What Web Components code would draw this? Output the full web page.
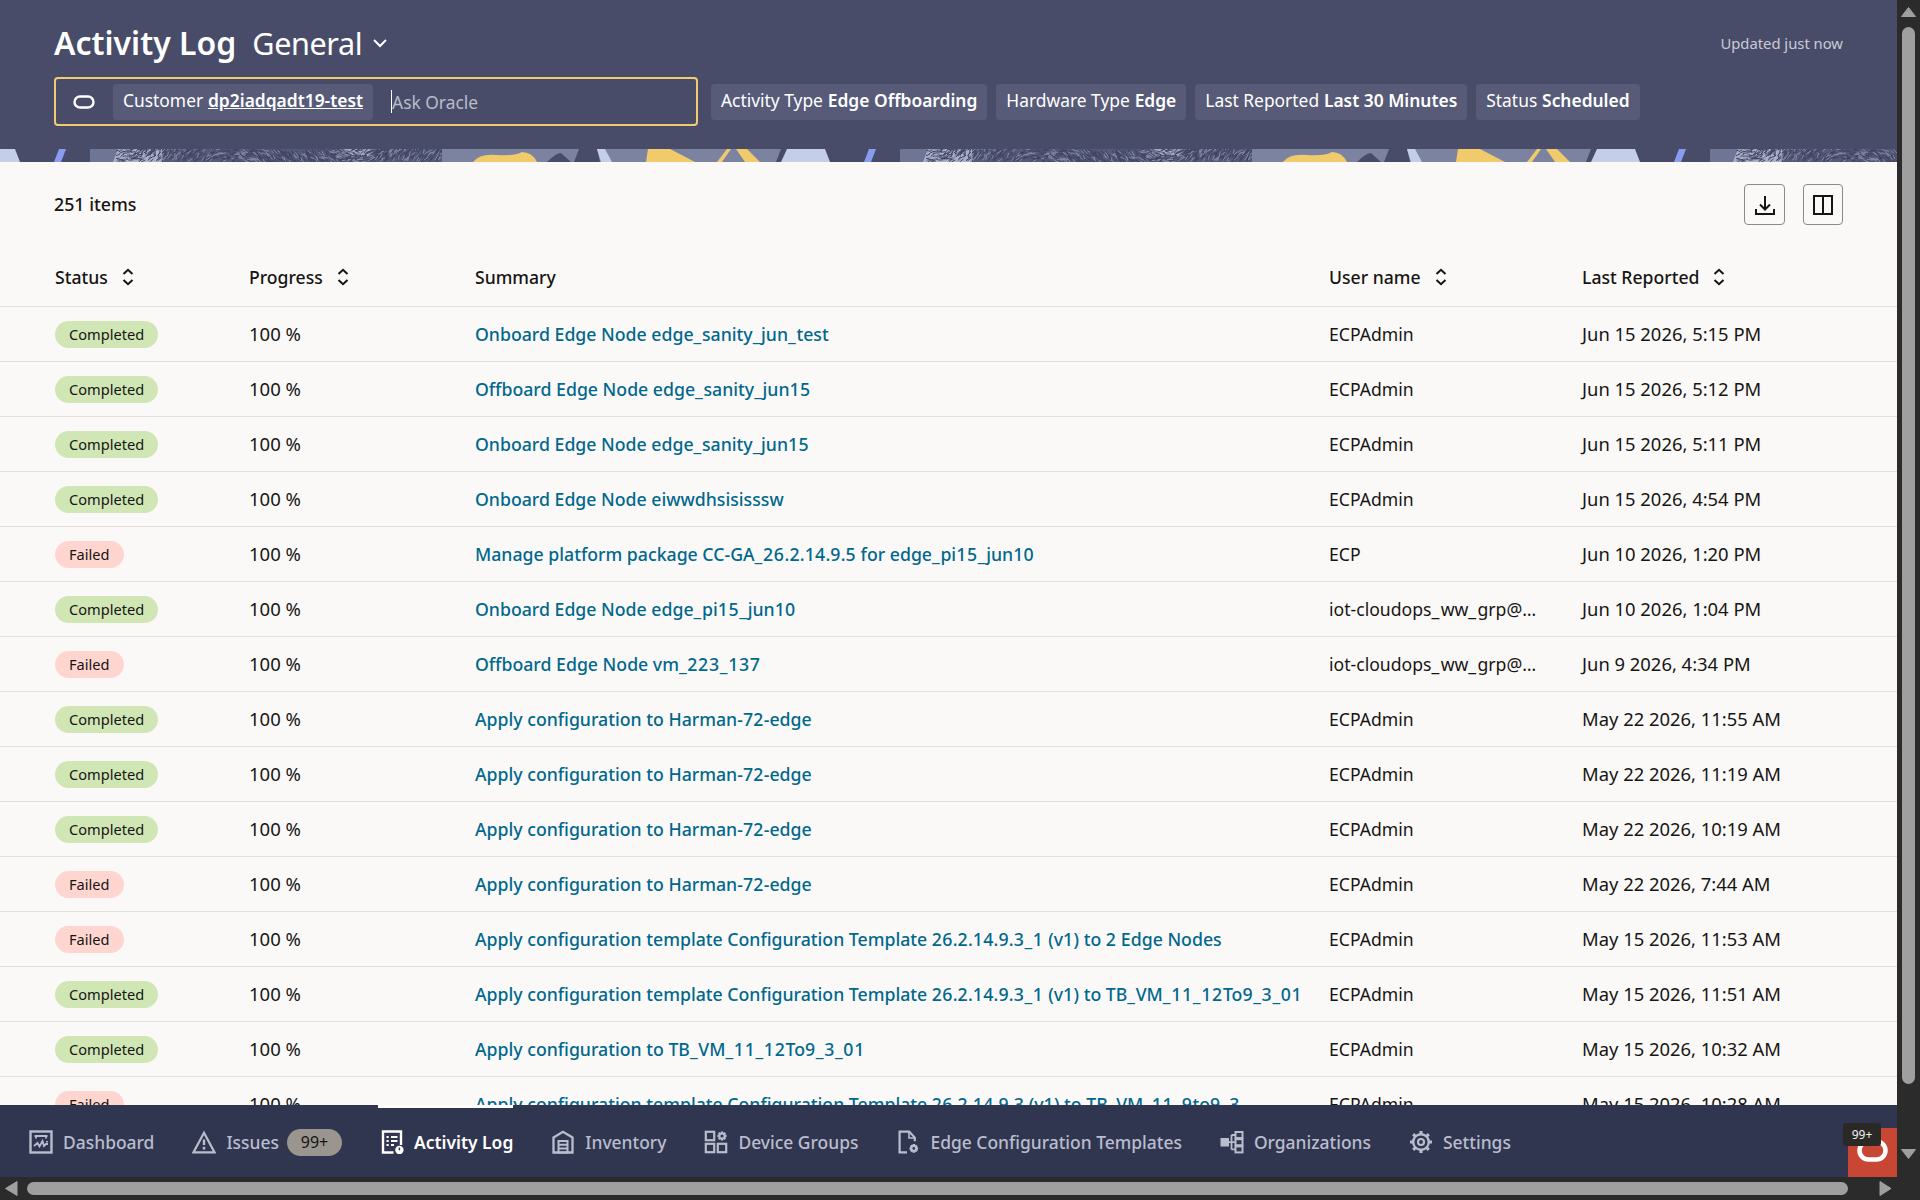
<!DOCTYPE html>
<html lang="en">
<head>
<meta charset="utf-8">
<title>Activity Log</title>
<style>
  html, body { margin: 0; height: 100%; overflow: hidden; background: #2b2b2b; }
  body { font-family: "Noto Sans", "Liberation Sans", sans-serif; color: #161513; }
</style>
</head>
<body>
<app-shell>
  <page-header slot="top" updated="Updated just now">
    <filter-chip slot="search" label="Customer" value="dp2iadqadt19-test" link></filter-chip>
    <filter-chip label="Activity Type" value="Edge Offboarding"></filter-chip>
    <filter-chip label="Hardware Type" value="Edge"></filter-chip>
    <filter-chip label="Last Reported" value="Last 30 Minutes"></filter-chip>
    <filter-chip label="Status" value="Scheduled"></filter-chip>
  </page-header>
  <pattern-band slot="top"></pattern-band>
  <table-toolbar slot="top" count="251 items"></table-toolbar>
  <activity-table></activity-table>
  <nav-bar slot="bottom">
    <nav-item icon="dashboard">Dashboard</nav-item>
    <nav-item icon="issues" badge="99+">Issues</nav-item>
    <nav-item icon="activity" active>Activity Log</nav-item>
    <nav-item icon="inventory">Inventory</nav-item>
    <nav-item icon="groups">Device Groups</nav-item>
    <nav-item icon="template">Edge Configuration Templates</nav-item>
    <nav-item icon="orgs">Organizations</nav-item>
    <nav-item icon="settings">Settings</nav-item>
  </nav-bar>
</app-shell>

<script>
const FONT = `"Noto Sans", "Liberation Sans", sans-serif`

// a cog: ring plus teeth, all as thick strokes
function gear(cx, cy, r, teeth, tw, sw) {
  let t = ''
  for (let i = 0; i < teeth; i++) {
    const a = i * 2 * Math.PI / teeth
    const x1 = cx + Math.cos(a) * r, y1 = cy + Math.sin(a) * r
    const x2 = cx + Math.cos(a) * (r + tw), y2 = cy + Math.sin(a) * (r + tw)
    t += `M${x1.toFixed(2)} ${y1.toFixed(2)}L${x2.toFixed(2)} ${y2.toFixed(2)}`
  }
  return `<circle cx="${cx}" cy="${cy}" r="${r}" stroke-width="${sw}"/><path d="${t}" stroke-width="${sw * 1.3}"/>`
}

// the reference font sets digits and underscores wider than Noto Sans
const widen = s => s.replace(/[\d_]+/g, m => `<span class="${m.includes('_') ? 'u' : 'd'}">${m}</span>`)

const ICONS = {
  dashboard: `<rect x="1.5" y="1.5" width="21" height="21" stroke-width="2.4"/><path d="M5.5 6h13M7 6v2.5M17 6v2.5" stroke-width="1.8"/><path d="M5 16l3.5-3 2 3.5 3-5.5 1.5 5 2-2h2" stroke-width="1.8"/><path d="M18 11v1.4" stroke-width="1.8"/>`,
  issues: `<path d="M12 2.8 22.6 22.4H1.4z" stroke-width="2.2"/><path d="M12 9.5v5.5M12 16.8v2.6" stroke-width="2.4"/>`,
  activity: `<path d="M13.5 22.5H3V1.5h18v13.5" stroke-width="2.4"/><path d="M6.5 7h2.2M11 7h6.5M6.5 11h2.2M11 11h6.5M6.5 15h2.2M11 15h3" stroke-width="2"/><circle cx="19.4" cy="20" r="4.2" fill="currentColor" stroke="none"/><path d="M19.4 17.6v2.8" stroke="#313650" stroke-width="1.4"/>`,
  inventory: `<path d="M2.5 7.5 12 1.8l9.5 5.7v15h-19z" stroke-width="2.3"/><path d="M7.5 11h9v11.5h-9zM7.5 14.8h9M7.5 18.6h9" stroke-width="2"/>`,
  groups: `<rect x="1.8" y="1.8" width="8.4" height="8.4" stroke-width="2.2"/><rect x="1.8" y="13.8" width="8.4" height="8.4" stroke-width="2.2"/><rect x="13.8" y="13.8" width="8.4" height="8.4" stroke-width="2.2"/>${gear(18, 6, 2.5, 8, 2.1, 1.8)}`,
  template: `<path d="M11 22.4H3.6V1.6h9.6l5.6 6v3.6" stroke-width="2.2"/><path d="M13 2v6h6" stroke-width="1.6"/>${gear(17.8, 18.4, 2.3, 8, 2, 1.9)}`,
  orgs: `<rect x="1.5" y="9" width="6.5" height="6.5" fill="currentColor"/><rect x="15.5" y="2" width="7" height="6" stroke-width="2"/><rect x="15.5" y="9.2" width="7" height="6" stroke-width="2"/><rect x="15.5" y="16.4" width="7" height="6" stroke-width="2"/><path d="M8 12.2h7.5M11.5 5v14.4M11.5 5h4M11.5 19.4h4" stroke-width="1.8"/>`,
  settings: `${gear(12, 12, 7.8, 8, 3.2, 2.4)}<circle cx="12" cy="12" r="3" stroke-width="2.2"/>`
}

const ROWS = [
  ["Completed", "Onboard Edge Node edge_sanity_jun_test", "ECPAdmin", "Jun 15 2026, 5:15 PM"],
  ["Completed", "Offboard Edge Node edge_sanity_jun15", "ECPAdmin", "Jun 15 2026, 5:12 PM"],
  ["Completed", "Onboard Edge Node edge_sanity_jun15", "ECPAdmin", "Jun 15 2026, 5:11 PM"],
  ["Completed", "Onboard Edge Node eiwwdhsisisssw", "ECPAdmin", "Jun 15 2026, 4:54 PM"],
  ["Failed", "Manage platform package CC-GA_26.2.14.9.5 for edge_pi15_jun10", "ECP", "Jun 10 2026, 1:20 PM"],
  ["Completed", "Onboard Edge Node edge_pi15_jun10", "iot-cloudops_ww_grp@…", "Jun 10 2026, 1:04 PM"],
  ["Failed", "Offboard Edge Node vm_223_137", "iot-cloudops_ww_grp@…", "Jun 9 2026, 4:34 PM"],
  ["Completed", "Apply configuration to Harman-72-edge", "ECPAdmin", "May 22 2026, 11:55 AM"],
  ["Completed", "Apply configuration to Harman-72-edge", "ECPAdmin", "May 22 2026, 11:19 AM"],
  ["Completed", "Apply configuration to Harman-72-edge", "ECPAdmin", "May 22 2026, 10:19 AM"],
  ["Failed", "Apply configuration to Harman-72-edge", "ECPAdmin", "May 22 2026, 7:44 AM"],
  ["Failed", "Apply configuration template Configuration Template 26.2.14.9.3_1 (v1) to 2 Edge Nodes", "ECPAdmin", "May 15 2026, 11:53 AM"],
  ["Completed", "Apply configuration template Configuration Template 26.2.14.9.3_1 (v1) to TB_VM_11_12To9_3_01", "ECPAdmin", "May 15 2026, 11:51 AM"],
  ["Completed", "Apply configuration to TB_VM_11_12To9_3_01", "ECPAdmin", "May 15 2026, 10:32 AM"],
  ["Failed", "Apply configuration template Configuration Template 26.2.14.9.3 (v1) to TB_VM_11_9to9_3", "ECPAdmin", "May 15 2026, 10:28 AM"]
]

class AppShell extends HTMLElement {
  constructor() {
    super()
    this.attachShadow({ mode: 'open' }).innerHTML = `<style>
      :host { display: grid; grid-template-columns: 1897px 23px; grid-template-rows: 1177px 23px; height: 1200px; font-family: ${FONT}; }
      .main { display: flex; flex-direction: column; min-height: 0; background: #fbf9f8; }
      .scroller { flex: 1; min-height: 0; overflow: hidden; }
    </style>
    <div class="main">
      <slot name="top"></slot>
      <div class="scroller"><slot></slot></div>
      <slot name="bottom"></slot>
    </div>
    <fake-scrollbar vertical></fake-scrollbar>
    <fake-scrollbar></fake-scrollbar>
    <div></div>`
  }
}

class FakeScrollbar extends HTMLElement {
  constructor() {
    super()
    const v = this.hasAttribute('vertical')
    this.attachShadow({ mode: 'open' }).innerHTML = `<style>
      :host { display: flex; background: #2b2b2b; flex-direction: ${v ? 'column' : 'row'}; align-items: ${v ? 'flex-start' : 'center'}; }
      .thumb { background: #9f9f9f; border-radius: 7px; }
      svg { display: block; flex: none; }
    </style>` + (v ? `
      <svg width="23" height="27" viewBox="0 0 23 27"><path d="M4.5 16.5 11.5 7.5 18.5 16.5z" fill="#9f9f9f" stroke="#9f9f9f" stroke-linejoin="round"/></svg>
      <div class="thumb" style="width:13px;height:1057px;margin-left:5px"></div>
      <svg width="23" height="29" viewBox="0 0 23 29" style="margin-top:auto;margin-bottom:0"><path d="M4.5 1.5H18.5L11.5 10.5z" fill="#9f9f9f" stroke="#9f9f9f" stroke-linejoin="round"/></svg>`
    : `
      <svg width="27" height="23" viewBox="0 0 27 23"><path d="M17 4.5V18.5L5.5 11.5z" fill="#9f9f9f" stroke="#9f9f9f" stroke-linejoin="round"/></svg>
      <div class="thumb" style="width:1821px;height:13px"></div>
      <svg width="49" height="23" viewBox="0 0 49 23"><path d="M32 4.5V18.5L43 11.5z" fill="#9f9f9f" stroke="#9f9f9f" stroke-linejoin="round"/></svg>`)
  }
}

class PageHeader extends HTMLElement {
  constructor() {
    super()
    this.attachShadow({ mode: 'open' }).innerHTML = `<style>
      :host { display: flex; flex-direction: column; box-sizing: border-box; height: 149px; padding: 22px 54px 0; background: #484c68; color: #fff; }
      .top { display: flex; align-items: baseline; height: 42px; }
      h1 { margin: 0; font-size: 32px; line-height: 42px; font-weight: 600; }
      .view { margin-left: 16px; font-size: 30.6px; line-height: 42px; font-weight: 400; letter-spacing: -.4px; }
      .chev { margin-left: 10px; align-self: center; }
      .updated { margin-left: auto; align-self: center; font-size: 14.8px; color: #c9cbd6; }
      .filters { display: flex; gap: 9px; margin-top: 13px; align-items: center; }
      .search { box-sizing: border-box; display: flex; align-items: center; width: 644px; height: 49px; margin-right: 4px; border: 2px solid #f0cc71; border-radius: 4px; padding-left: 17px; }
      .ring { flex: none; margin-right: 18px; display: block; }
      .ask { display: flex; align-items: center; margin-left: 18px; height: 23px; border-left: 1px solid #fff; font-size: 17.4px; color: #b9bccb; }
    </style>
    <div class="top">
      <h1>Activity Log</h1><span class="view">General</span>
      <svg class="chev" width="16" height="16" viewBox="0 0 16 16" fill="none" stroke="#fff" stroke-width="2"><path d="M2 5l6 6 6-6"/></svg>
      <span class="updated">${this.getAttribute('updated')}</span>
    </div>
    <div class="filters">
      <div class="search">
        <svg class="ring" width="22" height="14" viewBox="0 0 22 14" fill="none" stroke="#fff" stroke-width="2.4"><rect x="1.5" y="1.5" width="19" height="11" rx="5.5"/></svg>
        <slot name="search"></slot>
        <span class="ask">Ask Oracle</span>
      </div>
      <slot></slot>
    </div>`
  }
}

class FilterChip extends HTMLElement {
  constructor() {
    super()
    const link = this.hasAttribute('link')
    this.attachShadow({ mode: 'open' }).innerHTML = `<style>
      :host { display: inline-flex; align-items: center; box-sizing: border-box; height: 36px; padding: 0 10px 3px; background: #575b78; border-radius: 4px; font-size: 17.4px; color: #fff; white-space: nowrap; flex: none; }
      b { font-weight: 600; margin-left: .28em; }
      .link { text-decoration: underline; }
    </style>${this.getAttribute('label')} <b class="${link ? 'link' : ''}">${this.getAttribute('value')}</b>`
  }
}

class PatternBand extends HTMLElement {
  constructor() {
    super()
    // one repeat of the banner strip is 810px wide, the fur texture is random short dashes
    let seed = 7
    const rnd = () => (seed = (seed * 16807) % 2147483647) / 2147483647
    let dark = '', light = ''
    for (let i = 0; i < 900; i++) {
      const x = 116 + rnd() * 326, y = rnd() * 13
      const a = Math.sin(x / 37) + rnd() - .5, len = 3 + rnd() * 3
      const seg = `M${x.toFixed(1)} ${y.toFixed(1)}l${(Math.cos(a) * len).toFixed(1)} ${(Math.sin(a) * len).toFixed(1)}`
      if (i % 4 == 0) light += seg; else dark += seg
    }
    this.attachShadow({ mode: 'open' }).innerHTML = `<style>
      :host { display: block; height: 13px; background: #484c68; }
      svg { display: block; width: 100%; height: 13px; }
    </style>
    <svg xmlns="http://www.w3.org/2000/svg" preserveAspectRatio="none">
      <defs><pattern id="strip" patternUnits="userSpaceOnUse" width="810" height="13">
        <rect width="810" height="13" fill="#484c68"/>
        <path d="M0 0H15L20 13H0z" fill="#c5cee9"/>
        <path d="M59 0H66L61 13H54z" fill="#8a9cf2"/>
        <path d="M90 0H442V13H90z" fill="#6f7695"/>
        <path d="M118 0H162V13H113z" fill="#a9afcb"/>
        <path d="M162 0H442V13H162z" fill="#55597a"/>
        <path d="M343 0H375L368 7Q360 9 352 6z" fill="#a7acc4"/>
        <path d="${dark}" stroke="#3f4360" stroke-width="1" fill="none"/>
        <path d="${light}" stroke="#858aa6" stroke-width="1" fill="none"/>
        <path d="M442 0H781L776 13H442z" fill="#7b83a1"/>
        <path d="M473 13Q480 4 497 6 515 7 522 3 532 3 537 13z" fill="#f0ca6b"/>
        <path d="M547 13Q556 4 561 4L571 13z" fill="#484c68"/>
        <path d="M579 0H597L600 13H574z" fill="#484c68"/>
        <path d="M597 0H605L612 13H601z" fill="#c5cee9"/>
        <path d="M648 0H670L695 13H646z" fill="#f0ca6b"/>
        <path d="M727 0H731L722 13H717z" fill="#f0ca6b"/>
        <path d="M736 0H747L760 13H745z" fill="#f0ca6b"/>
        <path d="M787 0H810V13H781z" fill="#c5cee9"/>
      </pattern></defs>
      <rect width="100%" height="13" fill="url(#strip)"/>
    </svg>`
  }
}

class TableToolbar extends HTMLElement {
  constructor() {
    super()
    this.attachShadow({ mode: 'open' }).innerHTML = `<style>
      :host { display: flex; align-items: center; box-sizing: border-box; height: 85px; padding: 0 54px 0 54px; color: #161513; font-size: 17.8px; font-weight: 500; }
      span { padding-bottom: 2px; }
      .btns { margin-left: auto; display: flex; gap: 18px; }
      button { box-sizing: border-box; width: 41px; height: 41px; padding: 0; display: flex; align-items: center; justify-content: center; background: none; border: 1px solid #8d8a86; border-radius: 4px; color: #161513; }
      button + button { width: 40px; }
    </style>
    <span>${this.getAttribute('count')}</span>
    <div class="btns">
      <button><svg width="24" height="24" viewBox="0 0 24 24" fill="none" stroke="currentColor" stroke-width="2"><path d="M12 3v13M7 11.5l5 5 5-5M3 16v5h18v-5"/></svg></button>
      <button><svg width="24" height="24" viewBox="0 0 24 24" fill="none" stroke="currentColor" stroke-width="2"><path d="M3 3h18v18H3zM12 3v18"/></svg></button>
    </div>`
  }
}

class StatusBadge extends HTMLElement {
  constructor() {
    super()
    this.attachShadow({ mode: 'open' }).innerHTML = `<style>
      :host { display: inline-flex; align-items: center; box-sizing: border-box; height: 27px; padding: 0 14px; border-radius: 14px; font-size: 14.6px; background: #d1e6b5; color: #161513; }
      :host([failed]) { background: #ffd5d0; }
    </style><slot></slot>`
  }
}

class ActivityTable extends HTMLElement {
  constructor() {
    super()
    const sort = `<svg class="sort" width="14" height="18" viewBox="0 0 14 18" fill="none" stroke="currentColor" stroke-width="2"><path d="M2.5 6 7 1.8 11.5 6M2.5 12 7 16.2 11.5 12"/></svg>`
    const rows = ROWS.map(([st, sum, user, when]) => `<div class="row">
        <div><status-badge ${st == 'Failed' ? 'failed' : ''}>${st}</status-badge></div>
        <div class="pct">100 %</div>
        <div><a href="#">${widen(sum)}</a></div>
        <div class="user">${widen(user)}</div>
        <div class="when">${when}</div>
      </div>`).join('')
    this.attachShadow({ mode: 'open' }).innerHTML = `<style>
      :host { display: block; font-size: 17.6px; color: #161513; }
      .head, .row { display: grid; grid-template-columns: 194px 226px 854px 253px 1fr; padding-left: 55px; align-items: center; box-sizing: border-box; border-bottom: 1px solid #e3e1de; white-space: nowrap; }
      .head { height: 60px; font-weight: 500; }
      .head > div { display: flex; align-items: center; }
      .row { height: 55px; }
      .pct { font-size: 18.5px; padding-bottom: 1px; }
      .when { font-size: 18.4px; padding-bottom: 1px; }
      .sort { margin-left: 13px; }
      a { color: #00688c; font-size: 17.7px; font-weight: 500; text-decoration: none; }
      .d { letter-spacing: .3px; }
      .u { letter-spacing: .7px; }
      .user .u { letter-spacing: 1.4px; }
    </style>
    <div class="head">
      <div>Status ${sort}</div>
      <div>Progress ${sort}</div>
      <div>Summary</div>
      <div>User name ${sort}</div>
      <div>Last Reported ${sort}</div>
    </div>${rows}`
  }
}

class NavBar extends HTMLElement {
  constructor() {
    super()
    this.attachShadow({ mode: 'open' }).innerHTML = `<style>
      :host { display: flex; position: relative; box-sizing: border-box; height: 72px; padding-left: 29px; gap: 38px; background: #313650; flex: none; }
      .oracle { position: absolute; right: 0; bottom: 0; width: 49px; height: 49px; background: #c74634; overflow: visible; }
      .oracle svg { position: absolute; left: 9px; top: 11px; }
      .count { position: absolute; left: -5px; top: -5px; width: 38px; height: 23px; display: flex; align-items: center; justify-content: center; background: #2b2926; border-radius: 3px; font-size: 12px; color: #f1efed; }
    </style>
    <slot></slot>
    <div class="oracle">
      <svg width="31" height="23" viewBox="0 0 31 23" fill="none" stroke="#fff" stroke-width="4.5"><rect x="2.5" y="2.5" width="26" height="18" rx="9"/></svg>
      <span class="count">99+</span>
    </div>`
  }
}

class NavItem extends HTMLElement {
  constructor() {
    super()
    const badge = this.getAttribute('badge')
    this.attachShadow({ mode: 'open' }).innerHTML = `<style>
      :host { display: flex; align-items: center; gap: 10px; box-sizing: border-box; height: 72px; border-top: 3px solid transparent; padding-bottom: 1px; font-size: 17.45px; font-weight: 500; color: #b9bdcd; white-space: nowrap; }
      :host([active]) { color: #fff; border-top-color: #fff; margin-left: -2px; padding-left: 2px; font-weight: 600; }
      svg { display: block; flex: none; }
      .badge { margin-left: -2px; display: flex; align-items: center; justify-content: center; width: 55px; height: 27px; border-radius: 14px; background: #9a958e; color: #161513; font-size: 16px; font-weight: 400; }
    </style>
    <svg width="24" height="24" viewBox="0 0 24 24" fill="none" stroke="currentColor" stroke-width="2">${ICONS[this.getAttribute('icon')]}</svg>
    <slot></slot>
    ${badge ? `<span class="badge">${badge}</span>` : ''}`
  }
}

customElements.define('app-shell', AppShell)
customElements.define('fake-scrollbar', FakeScrollbar)
customElements.define('page-header', PageHeader)
customElements.define('filter-chip', FilterChip)
customElements.define('pattern-band', PatternBand)
customElements.define('table-toolbar', TableToolbar)
customElements.define('status-badge', StatusBadge)
customElements.define('activity-table', ActivityTable)
customElements.define('nav-bar', NavBar)
customElements.define('nav-item', NavItem)
</script>
</body>
</html>
